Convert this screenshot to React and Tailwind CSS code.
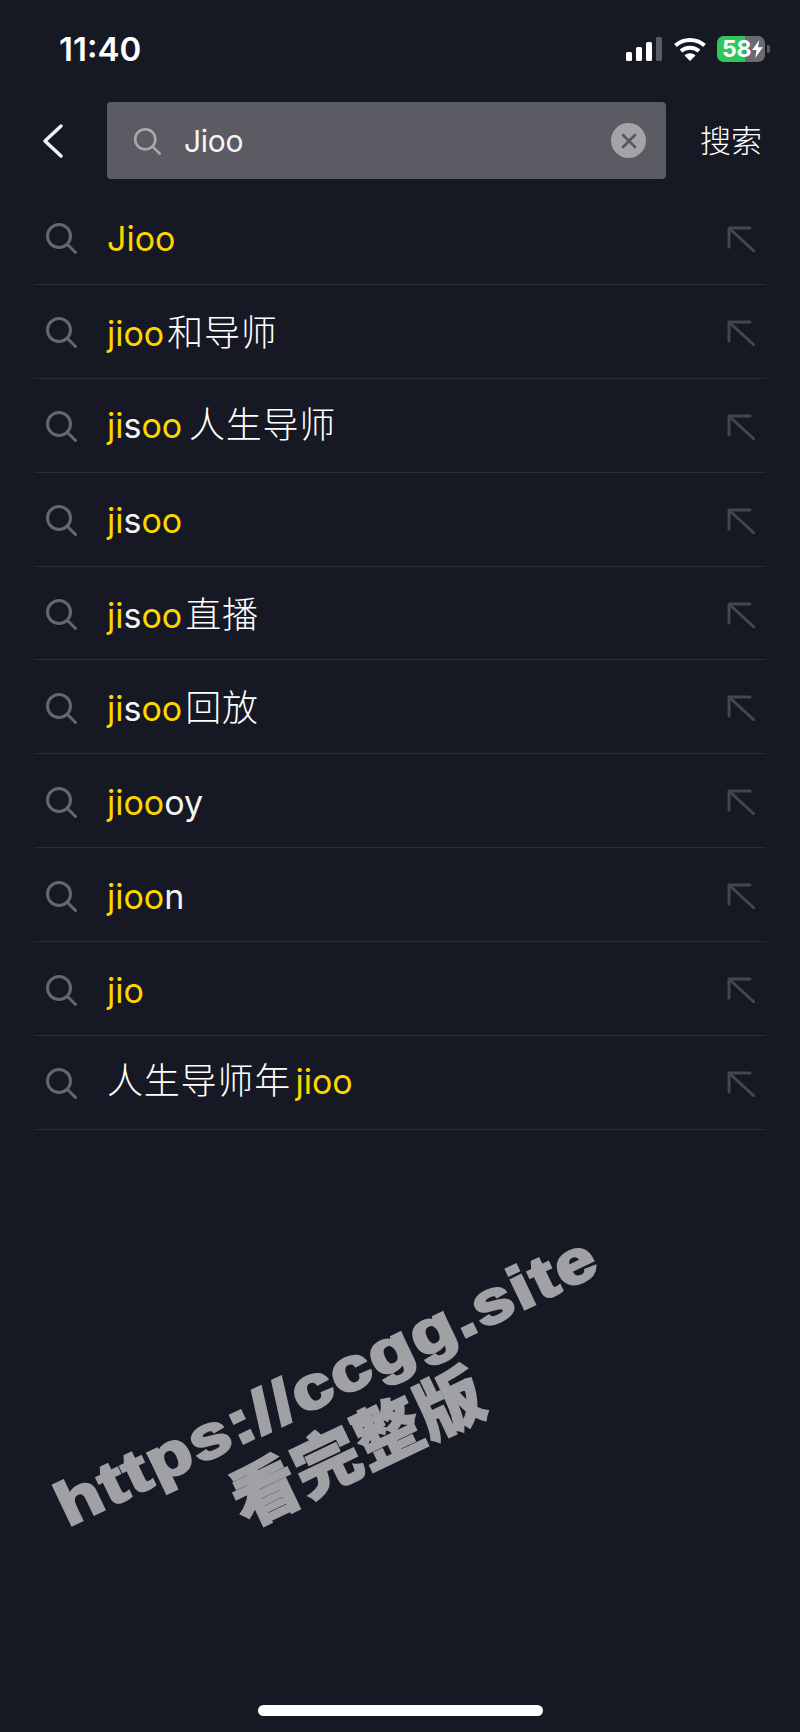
const SANS = "font-['Inter','Noto_Sans_CJK_SC',sans-serif]";

function SearchIcon({ className }) {
  return (
    <svg viewBox="0 0 32 32" className={className} fill="none" stroke="currentColor" strokeWidth="3" strokeLinecap="round">
      <circle cx="14" cy="14" r="11.500" />
      <path d="M23 23L30.500 30.500" />
    </svg>
  );
}

function ArrowIcon() {
  return (
    <svg viewBox="0 0 28 26" className="h-[26px] w-[28px] text-[#44454d]" fill="none" stroke="currentColor" strokeWidth="3" strokeLinecap="round" strokeLinejoin="round">
      <path d="M2 21V2H23" />
      <path d="M3 3L27 25" />
    </svg>
  );
}

const rows = [
  [["y", "Jioo"]],
  [["y", "jioo"], ["c", "和导师"]],
  [["y", "ji"], ["w", "s"], ["y", "oo"], ["s", " "], ["d", "人生导师"]],
  [["y", "ji"], ["w", "s"], ["y", "oo"]],
  [["y", "ji"], ["w", "s"], ["y", "oo"], ["c", "直播"]],
  [["y", "ji"], ["w", "s"], ["y", "oo"], ["c", "回放"]],
  [["y", "jioo"], ["w", "oy"]],
  [["y", "jioo"], ["w", "n"]],
  [["y", "jio"]],
  [["d", "人生导师年"], ["t", " "], ["y", "jioo"]],
];

const partClass = {
  y: "text-[#fdd600]",
  w: "text-[#f5f5f6]",
  s: "text-[24px]",
  t: "text-[16px]",
  c: "ml-[3px] text-[36px] font-light tracking-[0.8px] text-white",
  d: "text-[36px] font-light tracking-[0.8px] text-white",
};

function Row({ parts }) {
  return (
    <div className="flex h-[93.9px] items-center border-b border-[#2a2b33]">
      <SearchIcon className="ml-[11px] mt-[2px] h-[32px] w-[32px] shrink-0 text-[#66676d]" />
      <div className="ml-[30px] mt-[4px] flex-1 whitespace-pre text-[34px] font-[380] leading-[44px]">
        {parts.map(([c, t], i) => (
          <span key={i} className={partClass[c]}>{t}</span>
        ))}
      </div>
      <div className="mr-[11px] mt-[3px] flex"><ArrowIcon /></div>
    </div>
  );
}

export default function App() {
  return (
    <div className={`relative h-[1732px] w-[800px] overflow-hidden bg-[#161823] ${SANS}`}>
      {/* status bar */}
      <div className="flex h-[102px] items-start justify-between pl-[59px] pr-[30px] pt-[29px]">
        <span className="text-[33px] font-semibold leading-[40px] text-white">11:40</span>
        <div className="flex items-center gap-[11px] pt-[7px]">
          <svg viewBox="0 0 37 24" className="h-[24px] w-[37px]">
            <rect x="0" y="15" width="6" height="9" rx="1.500" fill="#fff" />
            <rect x="10" y="10" width="6" height="14" rx="1.500" fill="#fff" />
            <rect x="20" y="5" width="6" height="19" rx="1.500" fill="#fff" />
            <rect x="30" y="0" width="6" height="24" rx="1.500" fill="#5a5b63" />
          </svg>
          <svg viewBox="0 0 32 24" className="h-[24px] w-[32px]" fill="none" stroke="#fff" strokeWidth="4">
            <path d="M1.500 8.500C9.500 1 22.500 1 30.500 8.500" />
            <path d="M7 14C12 9.500 20 9.500 25 14" />
            <path d="M16 24L10.500 18.500C13.500 15.500 18.500 15.500 21.500 18.500Z" fill="#fff" stroke="none" />
          </svg>
          <div className="flex items-center gap-[2px]">
            <div className="relative flex h-[26px] w-[48px] items-center rounded-[7px] bg-[#6a6b70]">
              <div className="absolute inset-y-0 left-0 w-[28px] rounded-l-[7px] bg-[#2fc75a]" />
              <span className="relative ml-[5px] text-[23px] font-bold leading-[26px] tracking-[-0.3px] text-white">58</span>
              <svg viewBox="0 0 12 20" className="relative ml-[1px] h-[18px] w-[11px] shrink-0">
                <path d="M8 0L0 11H5L3.500 20L12 8H6.500Z" fill="#fff" />
              </svg>
            </div>
            <div className="h-[8px] w-[3px] rounded-r-[2px] bg-[#5a5b63]" />
          </div>
        </div>
      </div>

      {/* search header */}
      <div className="flex h-[77px] items-center">
        <svg viewBox="0 0 22 36" className="ml-[42px] h-[36px] w-[22px]" fill="none" stroke="#f1f1f2" strokeWidth="3.500" strokeLinecap="round" strokeLinejoin="round">
          <path d="M19 3L3 18L19 33" />
        </svg>
        <div className="ml-[43px] flex h-[77px] w-[559px] items-center rounded-[4px] bg-[#5a5b63]">
          <SearchIcon className="ml-[26px] h-[28px] w-[28px] shrink-0 text-[#a9aaae]" />
          <span className="ml-[23px] flex-1 text-[30px] font-[380] leading-[40px] tracking-[-0.3px] text-[#f5f5f6]">Jioo</span>
          <div className="mr-[20px] flex h-[35px] w-[35px] items-center justify-center rounded-full bg-[#a3a4a8]">
            <svg viewBox="0 0 16 16" className="h-[16px] w-[16px]" fill="none" stroke="#55565e" strokeWidth="2.600" strokeLinecap="round">
              <path d="M2 2L14 14M14 2L2 14" />
            </svg>
          </div>
        </div>
        <span className="ml-[34px] text-[31px] font-light leading-[40px] text-white">搜索</span>
      </div>

      {/* suggestions */}
      <div className="mx-[34px] mt-[12px] w-[732px]">
        {rows.map((parts, i) => (
          <Row key={i} parts={parts} />
        ))}
      </div>

      {/* watermark */}
      <div className="absolute left-[327px] top-[1341px] w-0 -rotate-[25.5deg] scale-x-[1.2]">
        <div className="flex w-0 justify-center whitespace-nowrap font-['Liberation_Sans',sans-serif] text-[60px] font-bold leading-[80px] tracking-[2px] text-[#a0a1a5] [-webkit-text-stroke:3px_#a0a1a5]">
          https://ccgg.site
        </div>
      </div>
      <div className="absolute left-[356px] top-[1403px] w-0 -rotate-[25.5deg]">
        <div className="flex w-0 justify-center whitespace-nowrap font-['Noto_Sans_CJK_SC',sans-serif] text-[67px] font-black leading-[80px] tracking-[1px] text-[#a0a1a5] [-webkit-text-stroke:1.5px_#a0a1a5]">
          看完整版
        </div>
      </div>

      {/* home indicator */}
      <div className="absolute bottom-[16px] left-[258px] h-[11px] w-[285px] rounded-full bg-white" />
    </div>
  );
}
